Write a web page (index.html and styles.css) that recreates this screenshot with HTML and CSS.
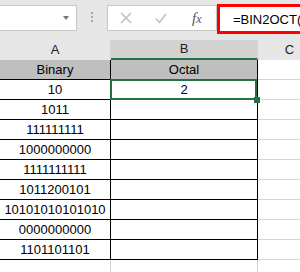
FILE: index.html
```html
<!DOCTYPE html>
<html lang="en">
<head>
  <meta charset="UTF-8" />
  <meta name="viewport" content="width=device-width, initial-scale=1.0"/>
  <title>BIN2OCT</title>
  <link rel="stylesheet" href="styles.css">
</head>
<body>
  <div class="bar">
    <div class="name-box"><span class="caret"></span></div>
    <div class="grip"><i></i><i></i><i></i></div>
    <div class="fx-box">
      <svg class="ico cancel" width="12" height="12" viewBox="0 0 12 12"><path d="M1 1L11 11M11 1L1 11" /></svg>
      <svg class="ico enter" width="12" height="11" viewBox="0 0 12 11"><path d="M1 5.5L4.5 9.5L11 1" /></svg>
      <span class="fx"><i>f</i><i class="sub">x</i></span>
    </div>
    <div class="formula">=BIN2OCT(A2)</div>
  </div>

  <div class="sheet">
    <div class="col-head">A</div>
    <div class="col-head active">B</div>
    <div class="col-head">C</div>

    <div class="cell a th">Binary</div>
    <div class="cell b th">Octal</div>
    <div class="cell c"></div>

    <div class="cell a">10</div>
    <div class="cell b sel">2</div>
    <div class="cell c"></div>

    <div class="cell a">1011</div>
    <div class="cell b"></div>
    <div class="cell c"></div>

    <div class="cell a">111111111</div>
    <div class="cell b"></div>
    <div class="cell c"></div>

    <div class="cell a">1000000000</div>
    <div class="cell b"></div>
    <div class="cell c"></div>

    <div class="cell a">1111111111</div>
    <div class="cell b"></div>
    <div class="cell c"></div>

    <div class="cell a">1011200101</div>
    <div class="cell b"></div>
    <div class="cell c"></div>

    <div class="cell a">10101010101010</div>
    <div class="cell b"></div>
    <div class="cell c"></div>

    <div class="cell a">0000000000</div>
    <div class="cell b"></div>
    <div class="cell c"></div>

    <div class="cell a">1101101101</div>
    <div class="cell b"></div>
    <div class="cell c"></div>

    <div class="cell e"></div>
    <div class="cell e"></div>
    <div class="cell e"></div>
  </div>
</body>
</html>
```

FILE: styles.css
```css
body {
  margin: 0;
  width: 300px;
  height: 272px;
  overflow: hidden;
  background: #fff;
  font-family: 'Liberation Sans', Arial, sans-serif;
  color: #000;
}
.bar {
  display: flex;
  align-items: flex-start;
  height: 40px;
  background: #e6e6e6;
}
.name-box {
  box-sizing: border-box;
  width: 78px;
  height: 26px;
  margin: 5px 0 0 -1px;
  padding-right: 7px;
  background: #fff;
  border: 1px solid #c6c6c6;
  display: flex;
  align-items: center;
  justify-content: flex-end;
}
.caret {
  width: 0;
  height: 0;
  border-left: 3px solid transparent;
  border-right: 3px solid transparent;
  border-top: 4px solid #777;
}
.grip {
  width: 30px;
  margin-top: 12px;
  display: flex;
  flex-direction: column;
  align-items: center;
  gap: 2px;
}
.grip i {
  width: 2px;
  height: 2px;
  background: #a8a8a8;
}
.fx-box {
  box-sizing: border-box;
  width: 110px;
  height: 26px;
  margin-top: 5px;
  padding-left: 12px;
  background: #fff;
  border: 1px solid #c6c6c6;
  display: flex;
  align-items: center;
}
.ico path {
  fill: none;
  stroke: #c2c2c2;
  stroke-width: 1.6;
}
.enter { margin-left: 23px; }
.fx {
  margin-left: 25px;
  font-family: 'Liberation Serif', serif;
  color: #555;
  font-size: 15px;
}
.fx .sub { font-size: 12px; }
.formula {
  flex: 1;
  height: 30px;
  margin: 4px -10px 0 0;
  padding: 1px 0 0 13px;
  box-sizing: border-box;
  border: 3px solid #ff0000;
  background: #fff;
  font-size: 13px;
  line-height: 23px;
  white-space: nowrap;
  overflow: hidden;
}
.sheet {
  display: grid;
  grid-template-columns: 111px 147px 64px;
  grid-auto-rows: 20px;
}
.col-head {
  box-sizing: border-box;
  background: #e6e6e6;
  border-right: 1px solid #d4d4d4;
  text-align: center;
  font-size: 13px;
  line-height: 20px;
  color: #222;
}
.col-head.active {
  background: #d2d2d2;
  border-bottom: 2px solid #217346;
  line-height: 18px;
}
.cell {
  box-sizing: border-box;
  border-bottom: 1px solid #000;
  text-align: center;
  font-size: 13px;
  line-height: 20px;
}
.cell.a, .cell.b { border-right: 1px solid #000; }
.cell.c, .cell.e {
  border-right: 1px solid #d4d4d4;
  border-bottom-color: #d4d4d4;
}
.th { background: #bfbfbf; }
.sel { position: relative; }
.sel::after {
  content: '';
  position: absolute;
  left: -1px;
  top: -1px;
  right: 0;
  bottom: -1px;
  border: 2px solid #217346;
}
.sel::before {
  content: '';
  position: absolute;
  right: -3px;
  bottom: -4px;
  width: 6px;
  height: 6px;
  background: #217346;
  z-index: 1;
}
```
